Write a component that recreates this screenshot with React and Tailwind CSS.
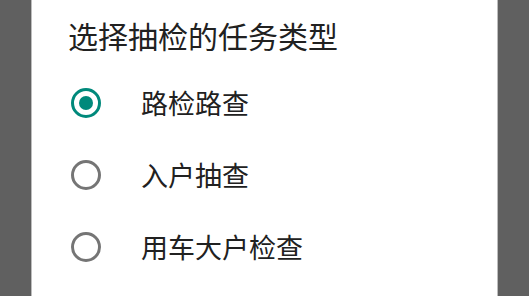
import React, { useState } from "react";

const options = ["路检路查", "入户抽查", "用车大户检查"];

const Radio = ({ checked }) => {
  return checked ? (
    <div className="flex h-[30px] w-[30px] items-center justify-center rounded-full border-[3px] border-[#00897b]">
      <div className="h-[14px] w-[14px] rounded-full bg-[#00897b]"></div>
    </div>
  ) : (
    <div className="h-[30px] w-[30px] rounded-full border-[3px] border-[#757575]"></div>
  );
};

const App = () => {
  const [selected, setSelected] = useState(0);

  return (
    <div
      className="flex h-[296px] w-[529px] overflow-hidden bg-[#606060]"
      style={{ fontFamily: '"Noto Sans CJK SC", "Noto Sans", sans-serif' }}
    >
      <div className="ml-[31px] h-full w-[467px] border-x border-[#bdbdbd] bg-white">
        <div className="pl-[36px] pt-[17px] text-[30px] leading-[36px] text-[#212121]">
          选择抽检的任务类型
        </div>
        <div className="mt-[14px] flex flex-col">
          {options.map((item, i) => (
            <div
              key={item}
              className="flex h-[72px] cursor-pointer items-center pl-[39px]"
              onClick={() => setSelected(i)}
            >
              <Radio checked={selected === i} />
              <div className="ml-[40px] text-[27px] leading-[36px] text-[#212121]">
                {item}
              </div>
            </div>
          ))}
        </div>
      </div>
    </div>
  );
};

export default App;
